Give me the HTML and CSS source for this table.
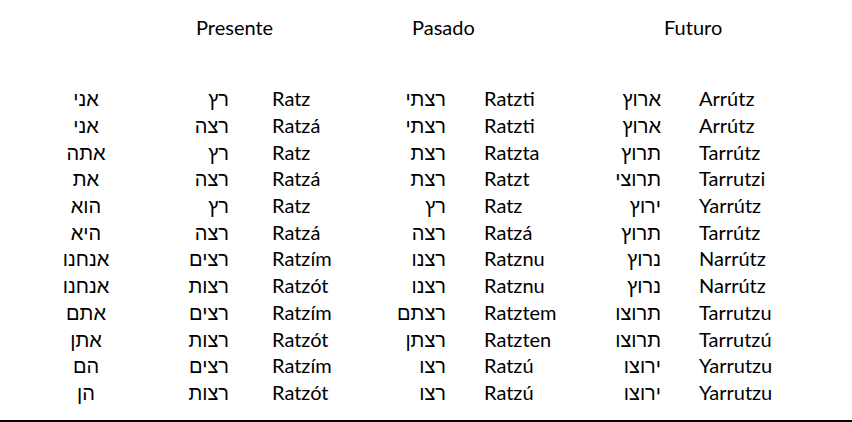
FILE: index.html
```html
<!DOCTYPE html>
<html lang="es">
<head>
<meta charset="utf-8">
<title>Conjugación</title>
<link rel="stylesheet" href="styles.css">
</head>
<body>
<div class="page">
  <div class="head">
    <span></span>
    <span>Presente</span>
    <span>Pasado</span>
    <span>Futuro</span>
  </div>
  <div class="table">
    <span class="c1" dir="rtl">אני</span><span class="c2" dir="rtl">רץ</span><span class="c3">Ratz</span><span class="c4" dir="rtl">רצתי</span><span class="c5">Ratzti</span><span class="c6" dir="rtl">ארוץ</span><span class="c7">Arrútz</span>
    <span class="c1" dir="rtl">אני</span><span class="c2" dir="rtl">רצה</span><span class="c3">Ratzá</span><span class="c4" dir="rtl">רצתי</span><span class="c5">Ratzti</span><span class="c6" dir="rtl">ארוץ</span><span class="c7">Arrútz</span>
    <span class="c1" dir="rtl">אתה</span><span class="c2" dir="rtl">רץ</span><span class="c3">Ratz</span><span class="c4" dir="rtl">רצת</span><span class="c5">Ratzta</span><span class="c6" dir="rtl">תרוץ</span><span class="c7">Tarrútz</span>
    <span class="c1" dir="rtl">את</span><span class="c2" dir="rtl">רצה</span><span class="c3">Ratzá</span><span class="c4" dir="rtl">רצת</span><span class="c5">Ratzt</span><span class="c6" dir="rtl">תרוצי</span><span class="c7">Tarrutzi</span>
    <span class="c1" dir="rtl">הוא</span><span class="c2" dir="rtl">רץ</span><span class="c3">Ratz</span><span class="c4" dir="rtl">רץ</span><span class="c5">Ratz</span><span class="c6" dir="rtl">ירוץ</span><span class="c7">Yarrútz</span>
    <span class="c1" dir="rtl">היא</span><span class="c2" dir="rtl">רצה</span><span class="c3">Ratzá</span><span class="c4" dir="rtl">רצה</span><span class="c5">Ratzá</span><span class="c6" dir="rtl">תרוץ</span><span class="c7">Tarrútz</span>
    <span class="c1" dir="rtl">אנחנו</span><span class="c2" dir="rtl">רצים</span><span class="c3">Ratzím</span><span class="c4" dir="rtl">רצנו</span><span class="c5">Ratznu</span><span class="c6" dir="rtl">נרוץ</span><span class="c7">Narrútz</span>
    <span class="c1" dir="rtl">אנחנו</span><span class="c2" dir="rtl">רצות</span><span class="c3">Ratzót</span><span class="c4" dir="rtl">רצנו</span><span class="c5">Ratznu</span><span class="c6" dir="rtl">נרוץ</span><span class="c7">Narrútz</span>
    <span class="c1" dir="rtl">אתם</span><span class="c2" dir="rtl">רצים</span><span class="c3">Ratzím</span><span class="c4" dir="rtl">רצתם</span><span class="c5">Ratztem</span><span class="c6" dir="rtl">תרוצו</span><span class="c7">Tarrutzu</span>
    <span class="c1" dir="rtl">אתן</span><span class="c2" dir="rtl">רצות</span><span class="c3">Ratzót</span><span class="c4" dir="rtl">רצתן</span><span class="c5">Ratzten</span><span class="c6" dir="rtl">תרוצו</span><span class="c7">Tarrutzú</span>
    <span class="c1" dir="rtl">הם</span><span class="c2" dir="rtl">רצים</span><span class="c3">Ratzím</span><span class="c4" dir="rtl">רצו</span><span class="c5">Ratzú</span><span class="c6" dir="rtl">ירוצו</span><span class="c7">Yarrutzu</span>
    <span class="c1" dir="rtl">הן</span><span class="c2" dir="rtl">רצות</span><span class="c3">Ratzót</span><span class="c4" dir="rtl">רצו</span><span class="c5">Ratzú</span><span class="c6" dir="rtl">ירוצו</span><span class="c7">Yarrutzu</span>
  </div>
</div>
</body>
</html>
```

FILE: styles.css
```css
html, body {
  margin: 0;
  padding: 0;
  background: #fff;
}

.page {
  box-sizing: border-box;
  width: 852px;
  height: 422px;
  border-bottom: 2px solid #000;
  font-family: "Lato", "Liberation Sans", "DejaVu Sans", sans-serif;
  font-size: 20px;
  line-height: 26.7px;
  color: #000;
  padding-top: 13.5px;
  overflow: hidden;
}

.head {
  display: grid;
  grid-template-columns: 196px 216px 252px 1fr;
  white-space: nowrap;
}

.table {
  margin-top: 45px;
  display: grid;
  grid-template-columns: 172px 57px 171px 46px 174px 41px 1fr;
  white-space: nowrap;
}

.c1 { text-align: center; }
.c2, .c4, .c6 { text-align: right; }
.c3 { text-align: left; padding-left: 43px; }
.c5 { text-align: left; padding-left: 38px; }
.c7 { text-align: left; padding-left: 38px; }
```
